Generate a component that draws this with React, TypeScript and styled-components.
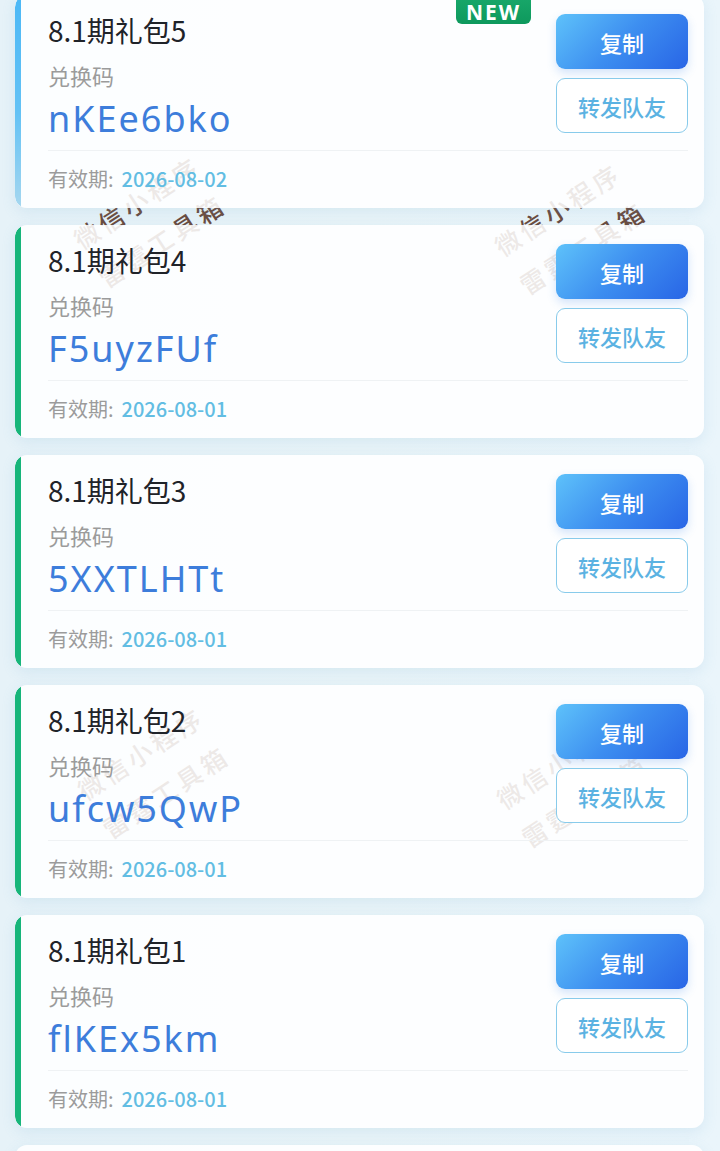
import styled, { createGlobalStyle } from 'styled-components';

const GlobalStyle = createGlobalStyle`
  html, body {
    margin: 0;
    padding: 0;
    background: #e8f3f8;
  }
  body {
    font-family: "Noto Sans CJK SC", "Noto Sans", sans-serif;
    overflow: hidden;
  }
`;

const gifts = [
  { id: 5, name: '8.1期礼包5', code: 'nKEe6bko', expire: '2026-08-02', isNew: true },
  { id: 4, name: '8.1期礼包4', code: 'F5uyzFUf', expire: '2026-08-01' },
  { id: 3, name: '8.1期礼包3', code: '5XXTLHTt', expire: '2026-08-01' },
  { id: 2, name: '8.1期礼包2', code: 'ufcw5QwP', expire: '2026-08-01' },
  { id: 1, name: '8.1期礼包1', code: 'flKEx5km', expire: '2026-08-01' },
];

const watermarks = [
  { x: 149, y: 221 },
  { x: 570, y: 228 },
  { x: 153, y: 772 },
  { x: 572, y: 781 },
];

const Page = styled.div`
  position: relative;
  height: 1151px;
  overflow: hidden;
  background: linear-gradient(90deg, #e6f2f8 0%, #e9f4f8 50%, #eaf5fb 100%);
`;

const Watermark = styled.div`
  position: absolute;
  z-index: 0;
  transform: translate(-50%, -50%) rotate(-33deg);
  font-size: 25px;
  font-weight: 500;
  line-height: 46px;
  letter-spacing: 4px;
  color: #6a4a3d;
  text-align: center;
  white-space: nowrap;
  pointer-events: none;
`;

const List = styled.div`
  position: relative;
  z-index: 1;
  display: flex;
  flex-direction: column;
  gap: 17px;
  margin-top: -5px;
  padding: 0 16px 0 15px;
`;

const Card = styled.div<{ $accent: string }>`
  position: relative;
  height: 213px;
  box-sizing: border-box;
  padding: 19px 16px 0 33px;
  border-radius: 12px;
  background: rgba(255, 255, 255, 0.88);
  box-shadow: 0 4px 14px rgba(110, 175, 210, 0.16);

  &::before {
    content: '';
    position: absolute;
    inset: 0;
    border-radius: inherit;
    background: ${(p) => p.$accent};
    -webkit-mask: linear-gradient(90deg, #000 6px, transparent 6px);
    mask: linear-gradient(90deg, #000 6px, transparent 6px);
  }
`;

const MoreCard = styled.div`
  height: 60px;
  border-radius: 12px;
  background: rgba(255, 255, 255, 0.88);
  box-shadow: 0 4px 14px rgba(110, 175, 210, 0.16);
`;

const NewBadge = styled.div`
  position: absolute;
  top: -5px;
  right: 173px;
  width: 75px;
  height: 34px;
  box-sizing: border-box;
  padding-top: 10px;
  border-radius: 6px;
  background: linear-gradient(180deg, #1bab6d, #0e995d);
  color: #fff;
  font-family: "Noto Sans", sans-serif;
  font-size: 21px;
  font-weight: 700;
  line-height: 24px;
  letter-spacing: 2px;
  text-align: center;
`;

const Top = styled.div`
  display: flex;
  justify-content: space-between;
  align-items: flex-start;
  padding-bottom: 9px;
  border-bottom: 1px solid #eff2f4;
`;

const Info = styled.div`
  display: flex;
  flex-direction: column;
`;

const Title = styled.div`
  font-size: 28px;
  line-height: 32px;
  color: #1f2329;
`;

const Label = styled.div`
  margin-top: 14px;
  font-size: 22px;
  line-height: 30px;
  color: #9b9b9b;
`;

const Code = styled.div`
  margin-top: 7px;
  font-family: "Noto Sans", "Noto Sans CJK SC", sans-serif;
  font-size: 36px;
  line-height: 44px;
  letter-spacing: 2px;
  color: #3d7ddb;
`;

const Actions = styled.div`
  display: flex;
  flex-direction: column;
  gap: 9px;
`;

const Button = styled.div<{ $primary?: boolean }>`
  width: 132px;
  height: 55px;
  box-sizing: border-box;
  display: flex;
  align-items: center;
  justify-content: center;
  border-radius: 9px;
  font-size: 22px;
  font-weight: 500;
  ${(p) =>
    p.$primary
      ? `
    background: linear-gradient(135deg, #5ec2fa 0%, #3d8ef0 50%, #2865e6 100%);
    color: #fff;
    box-shadow: 0 4px 10px rgba(60, 130, 230, 0.22);
  `
      : `
    background: #fff;
    color: #5bb2e2;
    border: 1.5px solid #88cbeb;
  `}
`;

const Footer = styled.div`
  display: flex;
  align-items: center;
  padding-top: 14px;
  font-size: 20px;
  line-height: 28px;
`;

const ExpireLabel = styled.span`
  color: #9b9b9b;
`;

const ExpireDate = styled.span`
  margin-left: 8px;
  color: #62bde3;
  font-weight: 500;
`;

const GREEN = '#17b57a';
const BLUE = 'linear-gradient(180deg, #4cb8f6 0%, #63c2f5 55%, #a6d7ef 100%)';

export default function App() {
  return (
    <>
      <GlobalStyle />
      <Page>
        {watermarks.map((w, i) => (
          <Watermark key={i} style={{ left: w.x, top: w.y }}>
            微信小程序
            <br />
            雷霆工具箱
          </Watermark>
        ))}
        <List>
          {gifts.map((g) => (
            <Card key={g.id} $accent={g.isNew ? BLUE : GREEN}>
              {g.isNew && <NewBadge>NEW</NewBadge>}
              <Top>
                <Info>
                  <Title>{g.name}</Title>
                  <Label>兑换码</Label>
                  <Code>{g.code}</Code>
                </Info>
                <Actions>
                  <Button $primary>复制</Button>
                  <Button>转发队友</Button>
                </Actions>
              </Top>
              <Footer>
                <ExpireLabel>有效期:</ExpireLabel>
                <ExpireDate>{g.expire}</ExpireDate>
              </Footer>
            </Card>
          ))}
          <MoreCard />
        </List>
      </Page>
    </>
  );
}
